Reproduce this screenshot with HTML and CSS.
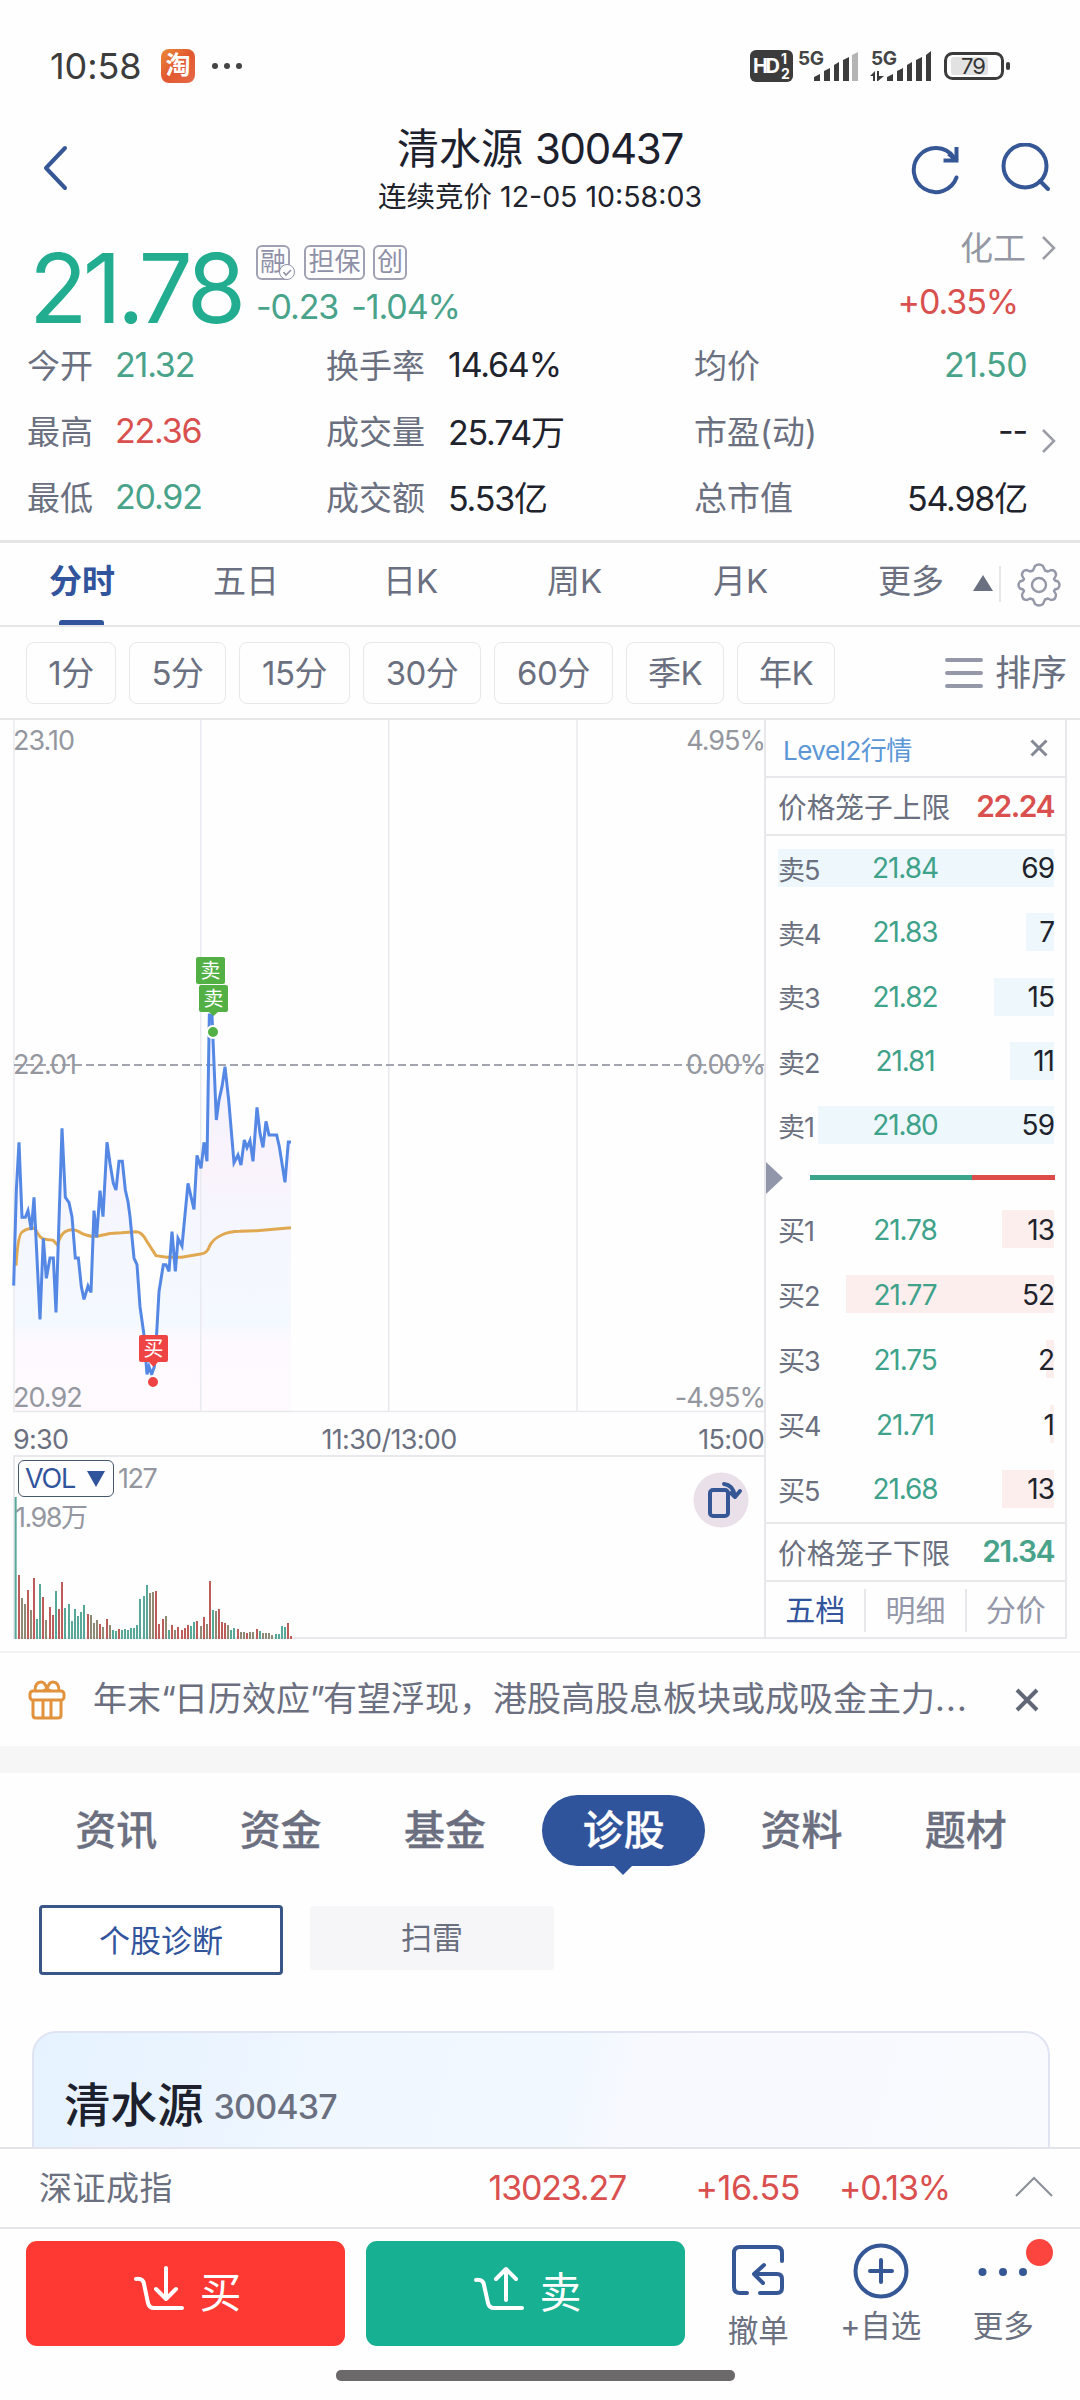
FILE: index.html
```html
<!DOCTYPE html>
<html lang="zh-CN">
<head>
<meta charset="utf-8">
<title>清水源 300437</title>
<link rel="stylesheet" href="styles.css">
</head>
<body>
<div class="phone">
  <header class="status">
    <span class="time">10:58</span>
    <span class="app-icon">淘</span>
    <svg class="dots" width="30" height="8"><g fill="#444"><circle cx="3" cy="4" r="3"/><circle cx="15" cy="4" r="3"/><circle cx="27" cy="4" r="3"/></g></svg>
    <svg class="signals" width="262" height="36" viewBox="0 0 262 36">
      <rect x="1" y="2" width="43" height="32" rx="6" fill="#3c3c3c"/>
      <g class="sig-text"><text x="4" y="25" font-size="20" fill="#fff" textLength="27">HD</text><text x="32" y="16" font-size="14" fill="#fff">1</text><text x="32" y="31" font-size="14" fill="#fff">2</text>
      <text x="49" y="17" font-size="19" fill="#444" textLength="26">5G</text><text x="122" y="17" font-size="19" fill="#444" textLength="26">5G</text></g>
      <g fill="#3c3c3c"><path d="M65 33v-4l6-3v7zM75 33V23l6-3v13zM85 33V17l5-3v19zM94 33V12l6-3v24z"/><path d="M103 33V7l6-3v29z" fill="#b5b5b5"/><path d="M138 33v-4l6-3v7zM148 33V23l6-3v13zM158 33V17l5-3v19zM167 33V12l6-3v24zM177 33V7l5-4v30z"/><path d="M121 28l5-5v10h-2v-5zM128 23h2v5h5l-6 5h-1z"/></g>
      <rect x="202" y="9" width="37" height="18" rx="3" fill="#e2e2e2"/>
      <rect x="196.500" y="5.500" width="57" height="25" rx="7" fill="none" stroke="#3c3c3c" stroke-width="3"/>
      <rect x="257" y="14" width="4" height="8" rx="2" fill="#3c3c3c"/>
      <text x="212" y="26" font-size="22" fill="#333" textLength="25">79</text>
    </svg>
  </header>

  <section class="titlebar">
    <svg class="back" width="26" height="48" viewBox="0 0 26 48"><path d="M23 4L4 24l19 20" class="ic"/></svg>
    <div class="title"><h1>清水源 <span>300437</span></h1><p>连续竞价 <span>12-05 10:58:03</span></p></div>
    <div class="actions">
      <svg width="52" height="52" viewBox="0 0 52 52"><path d="M46.500 34.500A22 22 0 1 1 43.500 14" class="ic"/><path d="M46.500 6v11.500H35.500M46 17L40 12" class="ic sq"/></svg>
      <svg width="52" height="52" viewBox="0 0 52 52"><circle cx="25" cy="23" r="21.500" class="ic"/><path d="M40 38l8 8" class="ic"/></svg>
    </div>
  </section>

  <section class="quote">
    <strong class="price">21.78</strong>
    <div class="quote-mid">
      <div class="tags"><span class="tag t1">融<svg class="check" width="18" height="18" viewBox="0 0 18 18"><circle cx="9" cy="9" r="7.500" fill="#fff" stroke="#8e90a8"/><path d="M5.500 9l2.500 3 5-5" fill="none" stroke="#8e90a8" stroke-width="1.600"/></svg></span><span class="tag t2">担保</span><span class="tag t1 t3">创</span></div>
      <div class="delta down"><span>-0.23</span><span>-1.04%</span></div>
    </div>
    <div class="sector"><div class="sector-name">化工<svg width="18" height="28" viewBox="0 0 18 28"><path d="M3 3l11 11L3 25" class="chev"/></svg></div><div class="up sector-pct">+0.35%</div></div>
  </section>

  <section class="stats">
    <div class="col c1">
      <div><label>今开</label><b class="down">21.32</b></div><div><label>最高</label><b class="up">22.36</b></div><div><label>最低</label><b class="down">20.92</b></div>
    </div>
    <div class="col c2">
      <div><label>换手率</label><b>14.64%</b></div><div><label>成交量</label><b>25.74万</b></div><div><label>成交额</label><b>5.53亿</b></div>
    </div>
    <div class="col c3">
      <div><label>均价</label><b class="down">21.50</b></div><div><label>市盈(动)</label><b>--</b></div><div><label>总市值</label><b>54.98亿</b></div>
    </div>
    <svg class="stats-more" width="18" height="28" viewBox="0 0 18 28"><path d="M3 3l11 11L3 25" class="chev"/></svg>
  </section>

  <nav class="periods">
    <span class="on">分时</span><span>五日</span><span>日K</span><span>周K</span><span>月K</span><span class="more">更多</span>
    <svg class="tri" width="20" height="16"><path d="M10 0l10 16H0z" fill="#6b7080"/></svg>
    <i class="sep"></i>
    <svg class="gear" width="44" height="44" viewBox="-22 -22 44 44"><path d="M-4-19Q0-22 4-19L6-14.500L9-13.500L12-15Q17-15 17-9.500L15-6L16-4.500L19-3.500Q22 0 19 3.500L16 4.500L15 6L17 9.500Q17 15 12 15L9 13.500L6 14.500L4 19Q0 22-4 19L-6 14.500L-9 13.500L-12 15Q-17 15-17 9.500L-15 6L-16 4.500L-19 3.500Q-22 0-19-3.500L-16-4.500L-15-6L-17-9.500Q-17-15-12-15L-9-13.500L-6-14.500Z" fill="none" stroke="#9498a8" stroke-width="2.400" stroke-linejoin="round"/><circle r="7" fill="none" stroke="#9498a8" stroke-width="2.400"/></svg>
  </nav>

  <div class="chips">
    <span class="w90">1分</span><span class="w97">5分</span><span class="w111">15分</span><span class="w118">30分</span><span class="w119">60分</span><span class="w98">季K</span><span class="w98">年K</span>
    <div class="sort"><svg width="38" height="30" viewBox="0 0 38 30"><path d="M2 2h34M2 15h34M2 28h34" stroke="#9498a8" stroke-width="4" stroke-linecap="round"/></svg>排序</div>
  </div>

  <main class="market">
    <div class="charts">
      <svg class="chart" width="764" height="735" viewBox="0 720 764 735">
        <defs><linearGradient id="area" x1="0" y1="0" x2="0" y2="1"><stop offset="0" stop-color="#eef2ff"/><stop offset=".4" stop-color="#faf3fc"/><stop offset=".5" stop-color="#f5f6fe"/><stop offset=".78" stop-color="#f4f9ff"/><stop offset=".82" stop-color="#fdf9fe"/><stop offset="1" stop-color="#fefafe"/></linearGradient></defs>
        <path transform="translate(0 920) scale(.33333)" fill="url(#area)" d="M42 1475V1097L57 667L66 892H76L84 872L94 930L102 832L120 1198L130 955L139 1075L150 1014H160L168 1177L186 625L196 832L207 848L216 890L226 1014H235L244 1100L252 1138L264 1098L273 1117L282 872L290 952L300 812L309 890L321 667L340 790L348 810L357 724H367L376 810L390 890L402 1014L411 1034L420 1160L432 1245L441 1363H463L470 1240L477 1115L490 1034H498L507 1054L516 935L526 1054L534 955L546 978L564 790L582 868L591 706L603 745L612 667L621 724L628 285H638L649 600L657 540L666 500L675 440L686 540L702 728L714 705L723 735L733 660L741 683L750 662L759 724L771 562L780 640L789 682L798 604L807 645H830L855 787L865 666H873V1475Z"/>
        <g stroke="#e9eaf0" stroke-width="1.500" fill="none"><path d="M14 720V1411.500H764M200.700 720V1411M388.700 720V1411M577 720V1411"/></g>
        <path d="M14 1065H764" stroke="#a2a5ae" stroke-width="2" stroke-dasharray="8 4"/>
        <g transform="translate(0 920) scale(.33333)" fill="none" stroke-width="9" stroke-linejoin="miter">
          <path stroke="#e0a850" d="M48 1037Q54 940 68 935Q82 924 105 925Q120 958 135 958L160 961L172 975Q184 935 202 932Q222 925 240 937Q266 952 295 948Q330 938 365 938L408 935Q426 935 440 963L468 1007L500 1012H545L602 1002Q622 1000 628 980C640 950 680 934 720 934L770 932L873 923"/>
          <path stroke="#5488e4" d="M41 1097L49 810L57 667L66 892H76L84 872L94 930L102 832L120 1198L130 955L139 1075L150 1014H160L168 1177L186 625L196 832L207 848L216 890L226 1014H235L244 1100L252 1138L264 1098L273 1117L282 872L290 952L300 812L309 890L321 667L330 730L340 790L348 810L357 724H367L376 810L384 845L390 890L402 1014L411 1034L420 1160L432 1245L441 1363L447 1340L455 1363L463 1340L470 1240L477 1115L490 1034H498L507 1054L516 935L526 1054L534 955L546 978L564 790L573 830L582 868L591 706L603 745L612 667L621 724L628 285H636L649 600L657 540L666 500L675 440L686 540L702 728L714 705L723 735L733 660L741 683L750 662L759 724L771 562L780 640L789 682L798 604L807 645H830L838 680L855 787L865 666H873"/>
        </g>
        <g class="ax"><text x="13" y="750">23.10</text><text x="13" y="1074">22.01</text><text x="13" y="1407">20.92</text><text x="765" y="750" text-anchor="end">4.95%</text><text x="765" y="1074" text-anchor="end">0.00%</text><text x="765" y="1407" text-anchor="end">-4.95%</text></g>
        <g class="ax tm"><text x="13" y="1449">9:30</text><text x="389" y="1449" text-anchor="middle">11:30/13:00</text><text x="764" y="1449" text-anchor="end">15:00</text></g>
        <g fill="#53b045"><rect x="196" y="957" width="29" height="27" rx="2"/><path d="M201 985h25q2 0 2 2v23q0 2-2 2h-8l-4.500 4-4.500-4h-8q-2 0-2-2v-23q0-2 2-2z"/><circle cx="213" cy="1032" r="6" stroke="#fff" stroke-width="2"/></g>
        <g fill="#ee4544"><path d="M141 1335h25q2 0 2 2v23q0 2-2 2h-8l-4.500 5-4.500-5h-8q-2 0-2-2v-23q0-2 2-2z"/><circle cx="153" cy="1382" r="6" stroke="#fff" stroke-width="2"/></g>
        <g class="mark"><text x="210.500" y="978">卖</text><text x="213.500" y="1006">卖</text><text x="153.500" y="1356">买</text></g>
      </svg>
      <div class="volume">
        <div class="vol-head"><span class="vol-box">VOL<svg width="18" height="16"><path d="M0 0h18L9 16z" fill="#31549c"/></svg></span><span class="vol-num">127</span></div>
        <div class="vol-max">1.98万</div>
        <svg class="vol-bars" width="310" height="184" viewBox="0 1455 310 184">
          <g transform="translate(0 1445) scale(.33333)" fill="none" stroke-width="6">
            <path stroke="#58a89a" d="M47 582V156M111 582V522M120 582V417M168 582V438M195 582V489M207 582V477M216 582V528M225 582V492M234 582V513M243 582V501M252 582V480M339 582V555M348 582V558M366 582V555M375 582V552M384 582V555M393 582V549M402 582V549M411 582V540M420 582V462M432 582V453M441 582V420M507 582V555M573 582V543M582 582V531M639 582V495M693 582V555M702 582V549M780 582V558M828 582V567M837 582V567M846 582V543M855 582V546"/>
            <path stroke="#bd5c58" d="M57 582V390M84 582V435M102 582V399M129 582V456M150 582V486M159 582V510M177 582V492M186 582V411M264 582V507M300 582V537M321 582V522M357 582V552M468 582V438M477 582V537M489 582V522M516 582V540M534 582V546M546 582V555M555 582V549M564 582V540M591 582V528M612 582V516M630 582V408M657 582V492M666 582V531M675 582V534M714 582V552M741 582V564M771 582V552M864 582V534M873 582V573"/>
            <path stroke="#8f8a76" d="M66 582V459M75 582V477M93 582V495M138 582V525M273 582V510M282 582V534M291 582V525M309 582V546M330 582V540M450 582V444M459 582V441M498 582V513M525 582V555M603 582V543M621 582V537M648 582V498M684 582V540M723 582V561M732 582V561M750 582V561M759 582V561M789 582V564M798 582V564M807 582V564M816 582V570"/>
          </g>
        </svg>
        <svg class="rotate" width="56" height="56" viewBox="0 0 56 56"><circle cx="28" cy="28" r="27.500" fill="#e9e0ea"/><g fill="none" stroke="#365796" stroke-width="4" stroke-linecap="round" stroke-linejoin="round"><rect x="17" y="18" width="18" height="26" rx="3"/><path d="M31 12q9 1 11 12M38 21l4 4 5-6"/></g></svg>
      </div>
    </div>

    <aside class="book">
      <div class="l2"><span>Level2行情</span><svg width="18" height="18" viewBox="0 0 18 18"><path d="M1.500 1.500l15 15M16.500 1.500l-15 15" stroke="#858995" stroke-width="3"/></svg></div>
      <div class="cage"><span>价格笼子上限</span><b class="up">22.24</b></div>
      <div class="rows sell">
        <div class="r"><i style="width:276px"></i><span>卖5</span><em>21.84</em><b>69</b></div>
        <div class="r"><i style="width:28px"></i><span>卖4</span><em>21.83</em><b>7</b></div>
        <div class="r"><i style="width:60px"></i><span>卖3</span><em>21.82</em><b>15</b></div>
        <div class="r"><i style="width:44px"></i><span>卖2</span><em>21.81</em><b>11</b></div>
        <div class="r"><i style="width:236px"></i><span>卖1</span><em>21.80</em><b>59</b></div>
      </div>
      <div class="ratio"><svg width="17" height="32"><path d="M0 0l17 16L0 32z" fill="#9196ab"/></svg><i class="g"></i><i class="rd"></i></div>
      <div class="rows buy">
        <div class="r"><i style="width:52px"></i><span>买1</span><em>21.78</em><b>13</b></div>
        <div class="r"><i style="width:208px"></i><span>买2</span><em>21.77</em><b>52</b></div>
        <div class="r"><i style="width:8px"></i><span>买3</span><em>21.75</em><b>2</b></div>
        <div class="r"><i style="width:4px"></i><span>买4</span><em>21.71</em><b>1</b></div>
        <div class="r"><i style="width:52px"></i><span>买5</span><em>21.68</em><b>13</b></div>
      </div>
      <div class="cage low"><span>价格笼子下限</span><b class="down">21.34</b></div>
      <div class="btabs"><span class="on">五档</span><span>明细</span><span>分价</span></div>
    </aside>
  </main>

  <div class="news">
    <svg width="40" height="42" viewBox="0 0 40 42"><g fill="none" stroke="#e2913d" stroke-width="3" stroke-linejoin="round"><rect x="3" y="12" width="34" height="9" rx="3"/><path d="M6 21v15q0 3 3 3h22q3 0 3-3V21M16 21v18M24 21v18M8 12Q8 3 14 3q4 0 6 7 2-7 6-7 6 0 6 9M20 10l-4 2M20 10l4 2"/></g></svg>
    <p>年末<span class="q">“</span>日历效应<span class="q">”</span>有望浮现，港股高股息板块或成吸金主力<span class="dot3">...</span></p>
    <svg width="24" height="24" viewBox="0 0 24 24"><path d="M2 2l20 20M22 2L2 22" stroke="#626778" stroke-width="4"/></svg>
  </div>

  <nav class="sections"><span>资讯</span><span>资金</span><span>基金</span><span class="on">诊股</span><span>资料</span><span>题材</span></nav>
  <div class="subtabs"><span class="on">个股诊断</span><span>扫雷</span></div>
  <div class="card-wrap"><div class="card"><strong>清水源</strong><span>300437</span></div></div>

  <div class="index"><span class="nm">深证成指</span><b class="i1">13023.27</b><b class="i2">+16.55</b><b class="i3">+0.13%</b><svg width="38" height="22" viewBox="0 0 38 22"><path d="M1 20L19 2l18 18" fill="none" stroke="#8a8e99" stroke-width="2"/></svg></div>

  <footer class="actionsbar">
    <button class="buybtn"><svg width="54" height="48" viewBox="0 0 54 48"><path d="M3 13q7-1 8 5l4 19q1 5 6 5h28M33 2v30M23 23l10 10 10-10" class="wi"/></svg>买</button>
    <button class="sellbtn"><svg width="54" height="48" viewBox="0 0 54 48"><path d="M3 14q7-1 8 5l4 18q1 5 6 5h28M33 34V3M23 13L33 3l10 10" class="wi"/></svg>卖</button>
    <div class="tool k1"><svg width="56" height="56" viewBox="0 0 56 56"><path d="M17 50H10q-6 0-6-6V10q0-6 6-6h36q6 0 6 6v8M30 50h17q5 0 5-5V36q0-5-5-5H25M34 22l-10 9 9 9" class="ic"/></svg><span>撤单</span></div>
    <div class="tool k2"><svg width="56" height="56" viewBox="0 0 56 56"><circle cx="28" cy="28" r="25.500" class="ic"/><path d="M28 17v22M17 28h22" class="ic"/></svg><span>+自选</span></div>
    <div class="tool k3"><svg width="56" height="56" viewBox="0 0 56 56"><g fill="#365796"><circle cx="7.500" cy="29" r="4"/><circle cx="28" cy="29" r="4"/><circle cx="48" cy="29" r="4"/></g></svg><span>更多</span><i class="badge"></i></div>
  </footer>
  <div class="home"><i></i></div>
</div>
</body>
</html>
```
FILE: styles.css
```css
* { box-sizing: border-box; }
body { margin: 0; background: #fefefe; font-family: Inter, "Noto Sans CJK SC", sans-serif; color: #20222c; }
b, em, i, strong, h1 { font-weight: 400; font-style: normal; }
p, h1 { margin: 0; }
svg { display: block; flex: none; }
.phone { width: 1080px; height: 2400px; overflow: hidden; display: flex; flex-direction: column; }
.phone > * { flex: none; }
.up { color: #d9504f; }
.down { color: #49a38a; }
.ic { fill: none; stroke: #365796; stroke-width: 4; stroke-linecap: round; stroke-linejoin: round; }
.sq { stroke-linecap: square; stroke-linejoin: miter; }
.chev { fill: none; stroke: #9a9ca6; stroke-width: 2.5; }

.status { height: 132px; padding: 0 69px 0 50px; display: flex; align-items: center; }
.time { font-size: 36px; letter-spacing: -0.1px; color: #3c3c3c; width: 111px; white-space: nowrap; }
.app-icon { width: 34px; height: 34px; border-radius: 8px; background: linear-gradient(135deg, #e98a37, #e2582f 50%, #e56a4a); color: #fff; font-size: 25px; font-weight: 700; line-height: 32px; text-align: center; }
.dots { margin-left: 17px; }
.signals { margin-left: auto; }
.sig-text { font-weight: 700; }

.titlebar { height: 88px; display: flex; align-items: flex-start; padding: 0 28px 0 42px; }
.back { margin-top: 12px; }
.title { text-align: center; width: 400px; margin-left: 272px; }
.title h1 { font-size: 42px; line-height: 46px; margin-top: -6px; color: #1d212d; }
.title h1 span { letter-spacing: -1.3px; }
.title p { font-size: 28.5px; line-height: 36px; margin-top: 7px; white-space: nowrap; }
.title p span { letter-spacing: 0; }
.actions { display: flex; gap: 38px; margin: 11px 0 0 auto; }

.quote { height: 112px; display: flex; padding: 0 22px 0 29px; }
.price { font-size: 96px; line-height: 112px; letter-spacing: -4.8px; color: #22ad90; width: 227px; margin-top: 12px; font-weight: 400; }
.tags { display: flex; gap: 14px; margin-top: 25px; height: 35px; }
.tag { border: 2px solid #a0a1b3; border-radius: 6px; color: #8e90a8; font-size: 26px; line-height: 30px; width: 34px; display: flex; justify-content: center; position: relative; }
.tag.t2 { width: 61px; }
.tag.t3 { margin-left: -6px; }
.check { position: absolute; right: -8px; bottom: -3px; }
.delta { font-size: 34px; line-height: 40px; margin-top: 7px; display: flex; gap: 13px; letter-spacing: -1.1px; white-space: nowrap; }
.sector { margin-left: auto; }
.sector-name { display: flex; align-items: center; justify-content: flex-end; gap: 14px; font-size: 33px; line-height: 44px; color: #9498a4; margin-top: 6px; }
.sector-pct { font-size: 34px; line-height: 40px; letter-spacing: -1.1px; margin-top: 12px; padding-right: 40px; text-align: right; }

.stats { height: 211px; border-bottom: 3px solid #e5e5e5; display: flex; padding-left: 27px; }
.col { margin-top: -1px; }
.col > div { height: 66px; display: flex; align-items: center; font-size: 33px; white-space: nowrap; }
.col label { color: #6b7080; }
.col b { font-size: 34px; letter-spacing: -1.2px; }
.c1 { width: 299px; } .c1 label { width: 88px; }
.c2 { width: 368px; } .c2 label { width: 122px; }
.c3 { width: 333px; } .c3 > div { justify-content: space-between; }
.c3 .down { letter-spacing: -.6px; }
.stats-more { margin: 95px 0 0 13px; }

.periods { height: 84px; border-bottom: 2px solid #e6e6e8; display: flex; align-items: flex-start; padding-left: 49px; font-size: 33px; line-height: 76px; color: #6b7080; }
.periods span { width: 166px; }
.periods span.on { color: #31549c; font-weight: 600; width: 164px; position: relative; }
.periods span.on::after { content: ""; position: absolute; left: 10px; bottom: -6px; width: 45px; height: 5px; border-radius: 3px 3px 0 0; background: #31549c; }
.periods span:nth-child(2) { width: 170px; } .periods span:nth-child(3) { width: 164px; } .periods span:nth-child(4) { width: 166px; } .periods span:nth-child(5) { width: 165px; }
.periods span.more { width: 95px; }
.tri { margin-top: 32px; }
.sep { width: 2px; height: 36px; background: #e6e6ea; margin: 23px 16px 0 6px; }
.gear { margin-top: 20px; }

.chips { height: 93px; border-bottom: 2px solid #e6e6e8; display: flex; padding: 15px 13px 0 26px; gap: 13px; font-size: 33px; color: #6b7080; }
.chips > span { height: 62px; border: 1.5px solid #e8e8ea; border-radius: 8px; text-align: center; line-height: 60px; letter-spacing: -.5px; }
.w90 { width: 90px; } .w97 { width: 97px; } .w111 { width: 111px; } .w118 { width: 118px; } .w119 { width: 119px; } .w98 { width: 98px; }
.sort { margin-left: auto; display: flex; align-items: center; gap: 12px; font-size: 36px; line-height: 58px; height: 61px; }

.market { height: 919px; display: flex; }
.charts { width: 764px; }
.ax { font-size: 27px; letter-spacing: -1px; fill: #9497a0; }
.ax.tm { fill: #6b7080; letter-spacing: -.7px; }
.mark { font-size: 20px; fill: #fff; text-anchor: middle; }
.volume { height: 184px; margin-left: 13px; border: 2px solid #e9e9ed; border-right: 0; position: relative; color: #9497a0; }
.vol-head { display: flex; gap: 4px; padding: 3px; align-items: center; font-size: 27px; }
.vol-box { height: 37px; width: 96px; border: 1.5px solid #46566b; border-radius: 6px; color: #31549c; display: flex; align-items: center; justify-content: space-between; padding: 0 8px 0 6px; letter-spacing: -1.2px; }
.vol-num { letter-spacing: -1.5px; }
.vol-max { font-size: 27px; line-height: 34px; margin-top: 1px; letter-spacing: -1.5px; }
.vol-bars { position: absolute; left: -15px; top: -2px; }
.rotate { position: absolute; right: 15px; top: 15px; }

.book { width: 303px; border: 2px solid #e8e8ec; border-top: 0; font-size: 28px; color: #6b7080; }
.l2 { height: 58px; border-bottom: 2px solid #e8e8ec; display: flex; align-items: center; justify-content: space-between; padding: 0 17px 0 17px; font-size: 26px; letter-spacing: -.5px; color: #5b97d6; }
.cage { height: 58px; border-bottom: 2px solid #e8e8ec; display: flex; align-items: center; justify-content: space-between; padding: 0 11px 1px 12px; font-size: 28.7px; white-space: nowrap; }
.cage b { font-weight: 600; font-size: 30px; letter-spacing: -1.5px; }
.r { height: 64.3px; display: grid; grid-template-columns: 92px 1fr 80px; align-items: center; padding: 0 11px 0 12px; position: relative; }
.ratio { padding-top: 1px; }
.buy .r { height: 64.9px; }
.r i { position: absolute; right: 11px; top: 13px; height: 38px; background: #edf7fc; }
.buy .r i { background: #fdeeee; }
.r span, .r em, .r b { position: relative; letter-spacing: -1px; font-size: 28px; white-space: nowrap; }
.r em { color: #3fa28a; letter-spacing: -1.1px; width: 70px; text-align: center; }
.r span { font-size: 27px; }
.r b { color: #20222c; text-align: right; }
.ratio { height: 40px; display: flex; align-items: center; }
.ratio i { height: 5px; background: #3aa58a; width: 162px; margin-left: 27px; }
.ratio i.rd { background: #dc4a49; width: 83px; margin-left: 0; }
.low { border-top: 2px solid #e8e8ec; height: 60px; }
.btabs { height: 57px; display: flex; align-items: center; font-size: 30px; color: #9498a8; }
.btabs span { flex: 1; text-align: center; height: 43px; line-height: 43px; }
.btabs span + span { border-left: 2px solid #e8e8ec; }
.btabs .on { color: #31549c; }

.news { height: 95px; margin-top: 12px; border-top: 2px solid #f3f3f4; display: flex; align-items: center; padding: 0 41px 0 27px; color: #6b6f80; }
.news p { font-size: 34px; width: 922px; margin-left: 26px; white-space: nowrap; margin-right: auto; line-height: 50px; padding-bottom: 1px; }
.q { letter-spacing: -2px; }
.dot3 { letter-spacing: 1.2px; }

.sections { height: 135px; border-top: 27px solid #f6f6f7; padding: 22px 32px 0 34px; display: flex; font-size: 41px; font-weight: 500; color: #6b6f80; -webkit-text-stroke: .3px currentColor; }
.sections span { width: 164.5px; height: 71px; line-height: 70px; text-align: center; }
.sections .on { width: 163px; background: #30549b; color: #fff; border-radius: 36px; position: relative; margin: 0 14px 0 15px; }
.sections .on::after { content: ""; position: absolute; left: 71px; top: 70px; border: 10px solid transparent; border-top-color: #30549b; border-bottom: 0; }
.subtabs { height: 150px; padding: 24px 39px 0; display: flex; gap: 27px; font-size: 31px; }
.subtabs span { width: 244px; height: 64px; margin-top: 1px; line-height: 64px; text-align: center; background: #f6f6f8; border-radius: 4px; color: #6b7080; }
.subtabs .on { height: 70px; margin-top: 0; line-height: 65px; border: 3px solid #3a5686; background: #fff; color: #31549c; }
.card-wrap { height: 116px; padding: 0 30px 0 32px; overflow: hidden; }
.card { height: 180px; border: 2px solid #dfe3f2; border-radius: 24px; background: linear-gradient(105deg, #e6f2ff 0, #eaf4ff 15%, #f0f7ff 30%, #f2f8ff 52%, #f7f9ff 58%, #f8fafe 100%); padding: 37px 30px; display: flex; align-items: baseline; gap: 10px; line-height: 70px; }
.card strong { font-size: 46.5px; font-weight: 500; color: #1d212d; }
.card span { font-size: 34px; font-weight: 500; color: #6b7080; letter-spacing: -.8px; position: relative; top: -3px; }

.index { height: 80px; border-top: 2px solid #e3e4ea; display: flex; align-items: center; padding: 0 27px 2px 39px; font-size: 33px; color: #6b7080; }
.nm { letter-spacing: .5px; margin-top: -2px; }
.index b { color: #d9504f; font-size: 34px; letter-spacing: -1.2px; text-align: right; }
.index .i1 { width: 453px; } .index .i2 { width: 174px; letter-spacing: -.4px; } .index .i3 { width: 150px; }
.index svg { margin-left: auto; }

.actionsbar { height: 136px; border-top: 2px solid #e6e6ea; padding: 12px 0 0 26px; display: flex; }
button { font-family: inherit; border: 0; width: 319px; height: 105px; border-radius: 11px; color: #fff; font-size: 42px; display: flex; align-items: center; justify-content: center; gap: 12px; padding: 0 0 8px 4px; margin-right: 21px; }
.buybtn { background: #fe3832; }
.sellbtn { background: #17b092; }
.wi { fill: none; stroke: #fff; stroke-width: 4; stroke-linecap: round; stroke-linejoin: round; }
.tool { display: flex; flex-direction: column; align-items: center; font-size: 30.5px; line-height: 34px; color: #6b7080; width: 122.5px; position: relative; margin-top: 2px; white-space: nowrap; }
.tool span { margin-top: 10px; }
.k1 { margin-left: -9px; } .k1 span { margin-top: 15px; }
.badge { position: absolute; right: 12px; top: -4px; width: 27px; height: 27px; border-radius: 50%; background: #fd453f; }
.home { display: flex; justify-content: center; padding: 7px 9px 0 0; }
.home i { width: 399px; height: 11px; border-radius: 5px; background: #6b696a; }
```
